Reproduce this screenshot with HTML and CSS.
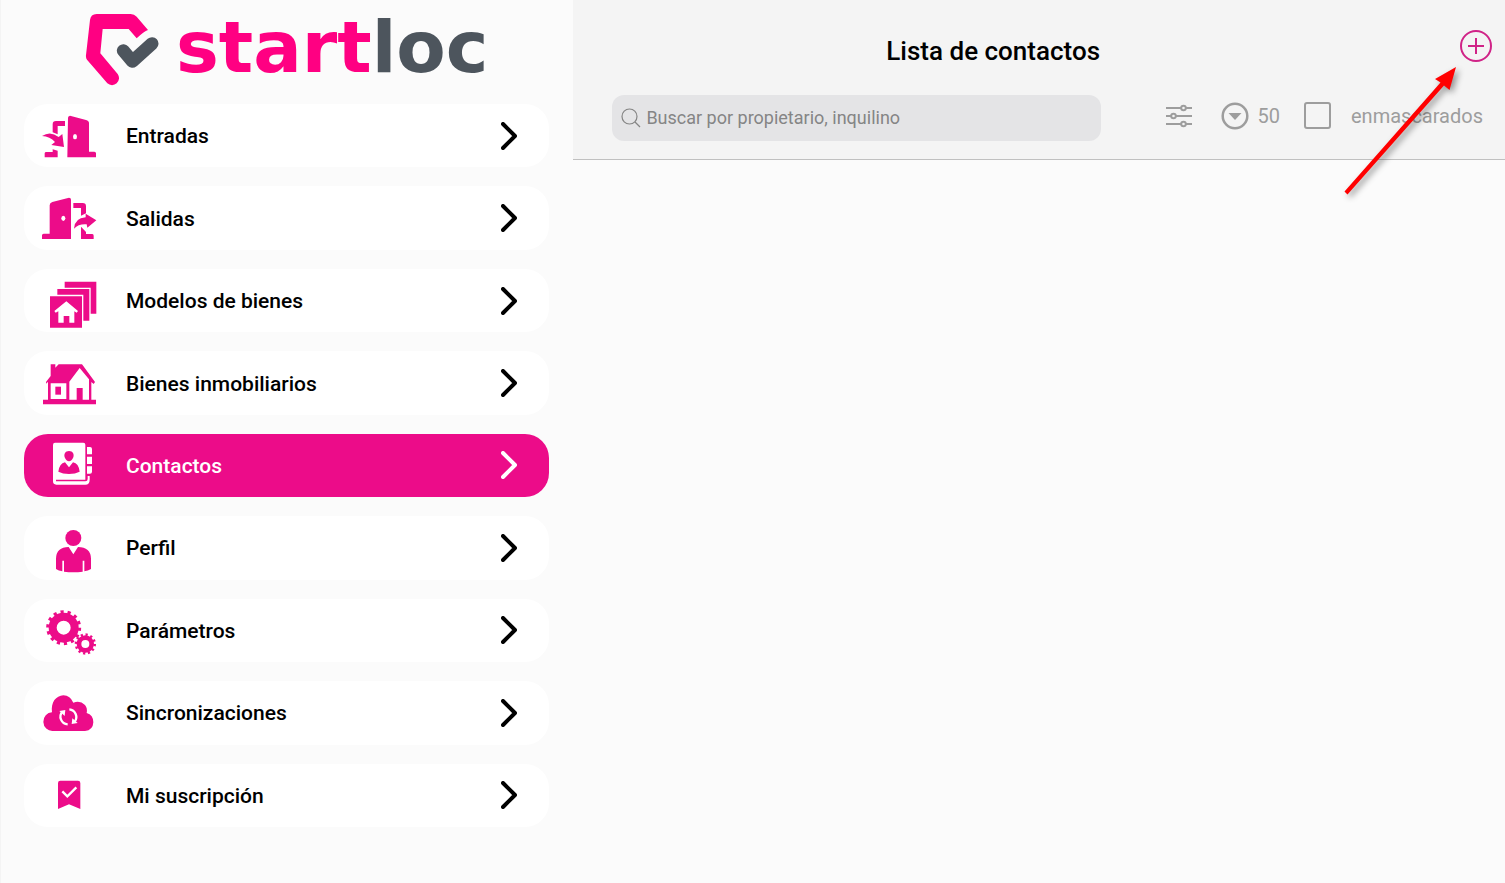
FILE: index.html
```html
<!DOCTYPE html>
<html lang="es">
<head>
<meta charset="utf-8">
<meta name="viewport" content="width=device-width, initial-scale=1">
<title>Startloc - Lista de contactos</title>
<link rel="stylesheet" href="styles.css">
</head>
<body>
<div class="app">
  <aside class="sidebar">
    <a class="logo" href="#" aria-label="startloc">
      <svg class="logo-mark" viewBox="45 36 225 225" aria-hidden="true">
        <path fill="#ff0082" d="M80 42H182Q193 42 200 50L234 90Q222 94 200 115L176 87H98L91 160L143 222A21 21 0 0 1 112 250L51 179Q47 174 48 165L60 60Q62 42 80 42Z"/>
        <path fill="none" stroke="#4d555d" stroke-width="39" stroke-linecap="round" stroke-linejoin="round" d="M160 152L187 184L246 131"/>
      </svg>
      <span class="logo-text">start<span class="logo-loc">loc</span></span>
    </a>
    <nav class="menu">
      <a class="item" href="#">
        <svg class="icon" viewBox="60 11 180 192" aria-hidden="true">
          <path d="M144 52Q144 47 150 46L198 59Q207 61 207 69V154H223Q228 154 228 159V171H142ZM98 96V72Q98 62 108 62H135V77H113V102ZM74 171V159Q74 155 79 155H98V147L113 151V171Z"/>
          <path d="M66 107Q91 90 116 110L127 101L132 140L94 134L105 125Q90 108 66 107Z"/>
          <ellipse class="cut" cx="165" cy="109" rx="6" ry="8"/>
        </svg>
        <span class="label">Entradas</span>
        <svg class="chevron" viewBox="0 0 16 28" aria-hidden="true"><path d="M2 2L14 14L2 26"/></svg>
      </a>
      <a class="item" href="#">
        <svg class="icon" viewBox="60 258 180 192" aria-hidden="true">
          <path d="M153 299Q153 293 147 293L97 306Q89 308 89 316V401H71Q66 401 66 406V417H153ZM160 309H188Q198 309 198 319V340L183 347V324H160ZM183 380L198 396V402H217Q221 402 221 407V417H183Z"/>
          <path d="M162 386Q164 354 197 352V341L229 361L202 383L200 373Q176 371 162 386Z"/>
          <ellipse class="cut" cx="130" cy="355" rx="6" ry="8"/>
        </svg>
        <span class="label">Salidas</span>
        <svg class="chevron" viewBox="0 0 16 28" aria-hidden="true"><path d="M2 2L14 14L2 26"/></svg>
      </a>
      <a class="item" href="#">
        <svg class="icon" viewBox="60 11 180 192" aria-hidden="true">
          <path d="M90 93H186V187H90ZM112 71H208V166H190V88H112ZM134 49H229V145H212V67H134Z"/>
          <path class="cut" d="M139 108L174 137L170 142L163 138V172H148V152H131V172H115V138L107 142L103 137Z"/>
        </svg>
        <span class="label">Modelos de bienes</span>
        <svg class="chevron" viewBox="0 0 16 28" aria-hidden="true"><path d="M2 2L14 14L2 26"/></svg>
      </a>
      <a class="item" href="#">
        <svg class="icon" viewBox="60 258 180 192" aria-hidden="true">
          <path d="M92 298H106V308L116 298H186L225 351L221 357L214 351V404H228V418H69V404H84V350L79 356L78 351L92 333Z"/>
          <path class="cut" d="M92 355H139V402H92ZM148 350L179 309L207 343V404H188V369H170V404H148Z"/>
          <path d="M106 365H123V389H106Z"/>
        </svg>
        <span class="label">Bienes inmobiliarios</span>
        <svg class="chevron" viewBox="0 0 16 28" aria-hidden="true"><path d="M2 2L14 14L2 26"/></svg>
      </a>
      <a class="item active" href="#" aria-current="page">
        <svg class="icon" viewBox="60 9 180 192" aria-hidden="true">
          <path d="M105 38H190Q196 38 196 44V149H108V154H196Q203 154 203 147V138H209V149Q209 164 196 164H109Q99 164 99 154V45Q99 38 105 38ZM201 51H210Q216 51 216 57V73H201ZM201 80H216V102H201ZM201 109H216V125Q216 131 210 131H201Z"/>
          <path class="cut" d="M147 63C159 63 163 73 160 82Q155 94 147 94Q139 94 134 82C131 72 136 63 147 63ZM135 97L147 112L159 97Q176 100 179 125Q166 132 147 132Q128 132 115 125Q118 101 135 97Z"/>
        </svg>
        <span class="label">Contactos</span>
        <svg class="chevron" viewBox="0 0 16 28" aria-hidden="true"><path d="M2 2L14 14L2 26"/></svg>
      </a>
      <a class="item" href="#">
        <svg class="icon" viewBox="60 258 180 192" aria-hidden="true">
          <circle cx="160" cy="324" r="24"/>
          <path d="M146 351L160 373L174 351Q212 351 213 386V417Q204 423 193 424V392H188V425Q160 428 132 425V392H127V424Q116 423 108 417V386Q109 351 146 351Z"/>
        </svg>
        <span class="label">Perfil</span>
        <svg class="chevron" viewBox="0 0 16 28" aria-hidden="true"><path d="M2 2L14 14L2 26"/></svg>
      </a>
      <a class="item" href="#">
        <svg class="icon" viewBox="60 9 180 192" aria-hidden="true">
          <g class="gear">
            <circle cx="131" cy="98" r="33" stroke-width="24"/>
            <circle cx="131" cy="98" r="47" stroke-width="11" pathLength="28" stroke-dasharray="0.9 1.1"/>
            <circle cx="196" cy="147" r="19" stroke-width="14"/>
            <circle cx="196" cy="147" r="28" stroke-width="8" pathLength="24" stroke-dasharray="0.9 1.1"/>
          </g>
        </svg>
        <span class="label">Parámetros</span>
        <svg class="chevron" viewBox="0 0 16 28" aria-hidden="true"><path d="M2 2L14 14L2 26"/></svg>
      </a>
      <a class="item" href="#">
        <svg class="icon" viewBox="60 258 180 192" aria-hidden="true">
          <path d="M98 408A27 28 0 0 1 96 352C92 322 108 302 130 301Q151 302 160 323Q180 315 195 330Q203 339 200 354Q220 360 220 382Q219 406 195 408Z"/>
          <path class="sync" d="M143 388A23 23 0 0 1 127 350M148 343A23 23 0 0 1 164 380"/>
          <path class="cut" d="M118 348L136 345L134 363ZM173 384L155 387L157 370Z"/>
        </svg>
        <span class="label">Sincronizaciones</span>
        <svg class="chevron" viewBox="0 0 16 28" aria-hidden="true"><path d="M2 2L14 14L2 26"/></svg>
      </a>
      <a class="item" href="#">
        <svg class="icon" viewBox="60 25 180 192" aria-hidden="true">
          <path d="M121 78H174Q181 78 181 85V163L147 149L114 163V85Q114 78 121 78Z"/>
          <path class="tick" d="M127 110L142 125L169 98"/>
        </svg>
        <span class="label">Mi suscripción</span>
        <svg class="chevron" viewBox="0 0 16 28" aria-hidden="true"><path d="M2 2L14 14L2 26"/></svg>
      </a>
    </nav>
  </aside>

  <main class="content">
    <header class="header">
      <div class="title-bar">
        <h1 class="title">Lista de contactos</h1>
        <button class="add" type="button" aria-label="Añadir contacto">
          <svg viewBox="0 0 34 34" aria-hidden="true"><circle cx="17" cy="17" r="15"/><path d="M17 9V25M9 17H25"/></svg>
        </button>
      </div>
      <div class="tools">
        <label class="search">
          <svg class="search-icon" viewBox="0 0 20 20" aria-hidden="true"><circle cx="8.5" cy="8.5" r="7.5"/><path d="M14 14L19 19"/></svg>
          <input class="search-input" type="search" placeholder="Buscar por propietario, inquilino" aria-label="Buscar por propietario, inquilino">
        </label>
        <div class="filters">
          <button class="tool" type="button" aria-label="Filtros">
            <svg class="sliders" viewBox="0 0 26 24" aria-hidden="true"><path d="M0 4H15M20 4H26M0 12H5M10 12H26M0 20H15M20 20H26"/><circle cx="17.500" cy="4" r="2.300"/><circle cx="7.500" cy="12" r="2.300"/><circle cx="17.500" cy="20" r="2.300"/></svg>
          </button>
          <button class="tool count" type="button">
            <svg class="drop" viewBox="0 0 28 28" aria-hidden="true"><circle cx="14" cy="14" r="12.300"/><path d="M7.500 11H20.500L14 18Z"/></svg>
            <span>50</span>
          </button>
          <label class="masked"><input class="check" type="checkbox"><span>enmascarados</span></label>
        </div>
      </div>
      <svg class="arrow" viewBox="1336 60 130 145" aria-hidden="true"><path d="M1456 67L1449.500 90L1444 85.500L1347.500 194.500L1344.500 191.500L1440.500 82.500L1435 79Z"/></svg>
    </header>
  </main>
</div>
</body>
</html>
```

FILE: styles.css
```css
* {
  box-sizing: border-box;
}

body {
  margin: 0;
  background: #fbfbfb;
  color: #000;
  font-family: Roboto, "Liberation Sans", sans-serif;
}

button {
  padding: 0;
  border: 0;
  background: none;
  font: inherit;
  color: inherit;
}

.app {
  display: grid;
  grid-template-columns: 38.1% 1fr;
  min-height: 100vh;
}

.sidebar {
  display: flex;
  flex-direction: column;
  padding: 0 24px 56px 23px;
  border-left: 1px solid #f4f4f4;
}

.logo {
  display: flex;
  align-items: center;
  justify-content: center;
  gap: 16px;
  height: 104px;
  padding-bottom: 5px;
  color: #ff0082;
  text-decoration: none;
}

.logo-mark {
  width: 75px;
  height: 75px;
}

.logo-text {
  padding-bottom: 6px;
  font-family: "DejaVu Sans", sans-serif;
  font-size: 72px;
  font-weight: 700;
  line-height: 92px;
}

.logo-loc {
  color: #4d555d;
}

.menu {
  flex: 1;
  display: grid;
  grid-auto-rows: 1fr;
  gap: 19px;
}

.item {
  display: flex;
  align-items: center;
  padding: 0 32px 0 16px;
  border-radius: 24px;
  background: #fff;
  color: #000;
  font-size: 21px;
  font-weight: 500;
  line-height: 28px;
  text-decoration: none;
}

.active {
  background: #ec0c89;
  color: #fff;
}

.icon {
  width: 60px;
  height: 64px;
  margin: -1px 0;
  fill: #ec0c89;
}

.active .icon {
  fill: #fff;
}

.icon .cut {
  fill: #fff;
}

.active .icon .cut {
  fill: #ec0c89;
}

.gear {
  fill: none;
  stroke: #ec0c89;
}

.icon .sync,
.icon .tick {
  fill: none;
  stroke: #fff;
  stroke-width: 7;
}

.label {
  flex: 1;
  padding: 1px 0 0 26px;
}

.chevron {
  width: 16px;
  height: 28px;
  fill: none;
  stroke: currentColor;
  stroke-width: 4;
  stroke-linecap: round;
  stroke-linejoin: round;
}

.header {
  position: relative;
  padding-bottom: 18px;
  border-bottom: 1px solid #c0c0c0;
  background: #f4f4f4;
}

.title-bar {
  display: flex;
  align-items: center;
  gap: 46px;
  padding: 29px 12px 27px 0;
}

.title {
  flex: 1;
  margin: 0;
  padding-top: 6px;
  font-size: 26px;
  font-weight: 500;
  line-height: 33px;
  text-align: center;
}

.add {
  width: 34px;
  height: 34px;
  align-self: flex-start;
}

.add svg {
  display: block;
  fill: none;
  stroke: #d02387;
  stroke-width: 2;
}

.tools {
  display: flex;
  align-items: center;
  gap: 65px;
  padding: 0 22px 0 39px;
}

.search {
  flex: 1;
  display: flex;
  align-items: center;
  gap: 5px;
  height: 46px;
  padding: 0 9px;
  border-radius: 12px;
  background: #e4e4e6;
}

.search-icon {
  width: 20px;
  height: 20px;
  fill: none;
  stroke: #858585;
  stroke-width: 1.2;
}

.search-input {
  flex: 1;
  min-width: 0;
  padding: 0;
  border: 0;
  outline: 0;
  background: none;
  font: 18px/28px Roboto, "Liberation Sans", sans-serif;
}

.search-input::placeholder {
  color: #858585;
}

.filters {
  display: flex;
  align-items: center;
  padding-bottom: 5px;
  color: #9d9d9d;
  font-size: 20px;
  line-height: 28px;
}

.tool {
  display: flex;
  align-items: center;
}

.count {
  gap: 9px;
  margin: 0 24px 0 29px;
}

.sliders {
  width: 26px;
  height: 24px;
  fill: none;
  stroke: currentColor;
  stroke-width: 2;
}

.drop {
  width: 28px;
  height: 28px;
  fill: none;
  stroke: currentColor;
  stroke-width: 2.5;
}

.drop path {
  fill: currentColor;
  stroke: none;
}

.masked {
  display: flex;
  align-items: center;
  gap: 20px;
}

.check {
  appearance: none;
  width: 27px;
  height: 27px;
  margin: 0;
  border: 2px solid #9d9d9d;
  border-radius: 3px;
}

.arrow {
  position: absolute;
  top: 60px;
  right: 39px;
  width: 130px;
  height: 145px;
  fill: #f00;
  filter: drop-shadow(3px 3px 3px rgba(0, 0, 0, 0.4));
  pointer-events: none;
}
```
